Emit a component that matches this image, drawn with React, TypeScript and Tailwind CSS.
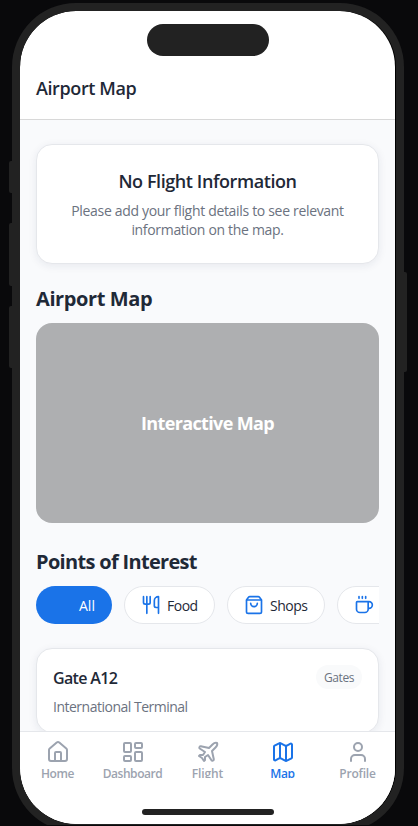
import React from 'react';
import { House, LayoutDashboard, Plane, Map as MapIcon, User, Utensils, ShoppingBag, Coffee } from 'lucide-react';
import type { LucideIcon } from 'lucide-react';

const chip = 'flex h-[38px] shrink-0 items-center rounded-full border border-[#e5e7eb] bg-white pl-4 text-[14px] text-[#1f2937]';

function Chip({ icon: Icon, label, width, textClass }: { icon: LucideIcon; label: string; width: string; textClass: string }) {
  return (
    <div className={`${chip} ${width}`}>
      <Icon size={20} color="#1a73e8" className="shrink-0" />
      <span className={`ml-1.5 ${textClass}`}>{label}</span>
    </div>
  );
}

const tabs: { icon: LucideIcon; label: string; textClass: string; active?: boolean }[] = [
  { icon: House, label: 'Home', textClass: 'tracking-[-0.4px]' },
  { icon: LayoutDashboard, label: 'Dashboard', textClass: 'tracking-[-0.45px]' },
  { icon: Plane, label: 'Flight', textClass: 'tracking-[-0.1px]' },
  { icon: MapIcon, label: 'Map', textClass: 'tracking-[-0.4px]', active: true },
  { icon: User, label: 'Profile', textClass: 'tracking-[-0.2px]' },
];

export default function App() {
  return (
    <div className="relative h-[826px] w-[418px] overflow-hidden bg-[#09090b] pt-[3px] pl-3 font-['Open_Sans','Noto_Sans',sans-serif] text-[#1f2937]">
      <div className="absolute top-[161px] left-[9px] h-8 w-[6px] rounded-[2px] bg-[#222]" />
      <div className="absolute top-[223px] left-[9px] h-[63px] w-[6px] rounded-[2px] bg-[#222]" />
      <div className="absolute top-[306px] left-[9px] h-[62px] w-[6px] rounded-[2px] bg-[#222]" />
      <div className="absolute top-[272px] left-[401px] h-[100px] w-[6px] rounded-[2px] bg-[#222]" />

      <div className="relative h-[829px] w-[392px] rounded-[64px] bg-[#222] p-2">
        <div className="flex h-[813px] w-[376px] overflow-hidden rounded-[56px] bg-black pr-px">
          <div className="relative flex h-full w-[375px] flex-col overflow-hidden rounded-[56px] bg-white">
            <div className="absolute top-[13px] left-[127px] h-8 w-[122px] rounded-full bg-[#222]" />

            <header className="flex h-[109px] shrink-0 items-end border-b border-[#d8d8d8] px-4 pb-[19px]">
              <h1 className="text-[18px] leading-6 font-semibold tracking-[-0.4px] whitespace-nowrap">Airport Map</h1>
            </header>

            <main className="h-[611px] shrink-0 overflow-hidden bg-[#f9fafc] px-4 pt-6">
              <section className="flex h-[120px] flex-col items-center rounded-2xl border border-[#e5e7eb] bg-white pt-6 text-center shadow-[0_2px_8px_rgba(31,41,80,0.08)]">
                <h2 className="text-[18px] leading-6 font-semibold tracking-[-0.42px] whitespace-nowrap">No Flight Information</h2>
                <p className="mt-2 text-[14px] leading-[19px] tracking-[-0.32px] whitespace-nowrap text-[#6b7280]">
                  Please add your flight details to see relevant
                  <br />
                  information on the map.
                </p>
              </section>

              <h2 className="mt-[21px] text-[20px] leading-[27px] font-bold tracking-[-0.4px] whitespace-nowrap">Airport Map</h2>
              <div className="mt-[11px] flex h-[200px] items-center justify-center rounded-2xl bg-[#aeafb1] text-[18px] font-bold text-white">
                <span className="tracking-[-0.65px] whitespace-nowrap">Interactive Map</span>
              </div>

              <h2 className="mt-[25px] text-[20px] leading-[27px] font-bold tracking-[-0.68px] whitespace-nowrap">Points of Interest</h2>
              <div className="mt-[11px] flex gap-3 overflow-hidden">
                <div className="flex h-[38px] w-[76px] shrink-0 items-center rounded-full bg-[#1a73e8] pl-[43px] text-[14px] text-white">All</div>
                <Chip icon={Utensils} label="Food" width="w-[91px]" textClass="tracking-[-0.5px]" />
                <Chip icon={ShoppingBag} label="Shops" width="w-[98px]" textClass="tracking-[-0.5px]" />
                <Chip icon={Coffee} label="" width="w-[98px]" textClass="tracking-[-0.5px]" />
              </div>

              <section className="mt-6 flex h-[85px] justify-between rounded-2xl border border-[#e5e7eb] bg-white p-4 shadow-[0_2px_8px_rgba(31,41,80,0.08)]">
                <div className="whitespace-nowrap">
                  <h3 className="mt-[3px] text-[16px] leading-[21px] font-semibold tracking-[-0.65px]">Gate A12</h3>
                  <p className="mt-2 text-[14px] leading-[19px] tracking-[-0.5px] text-[#6b7280]">International Terminal</p>
                </div>
                <span className="flex h-6 w-[46px] items-center justify-center rounded-full bg-[#f9fafb] pt-0.5 text-[12px] tracking-[-0.4px] text-[#6b7280]">Gates</span>
              </section>
            </main>

            <nav className="relative h-[93px] shrink-0 border-t border-[#e5e7eb] bg-white">
              <div className="grid h-[46px] grid-cols-5 overflow-hidden pt-2">
                {tabs.map(({ icon: Icon, label, textClass, active }) => (
                  <div key={label} className={active ? 'flex flex-col items-center text-[#1a73e8]' : 'flex flex-col items-center text-[#9ca3af]'}>
                    <Icon size={24} className="shrink-0" />
                    <span className={`mt-0.5 text-[12px] leading-4 font-semibold ${textClass}`}>{label}</span>
                  </div>
                ))}
              </div>
              <div className="absolute top-[77px] left-[122px] h-1.5 w-[132px] rounded-full bg-[#222]" />
            </nav>
          </div>
        </div>
      </div>
      <div className="absolute top-[825px] left-0 h-px w-full bg-[#09090b]" />
    </div>
  );
}
